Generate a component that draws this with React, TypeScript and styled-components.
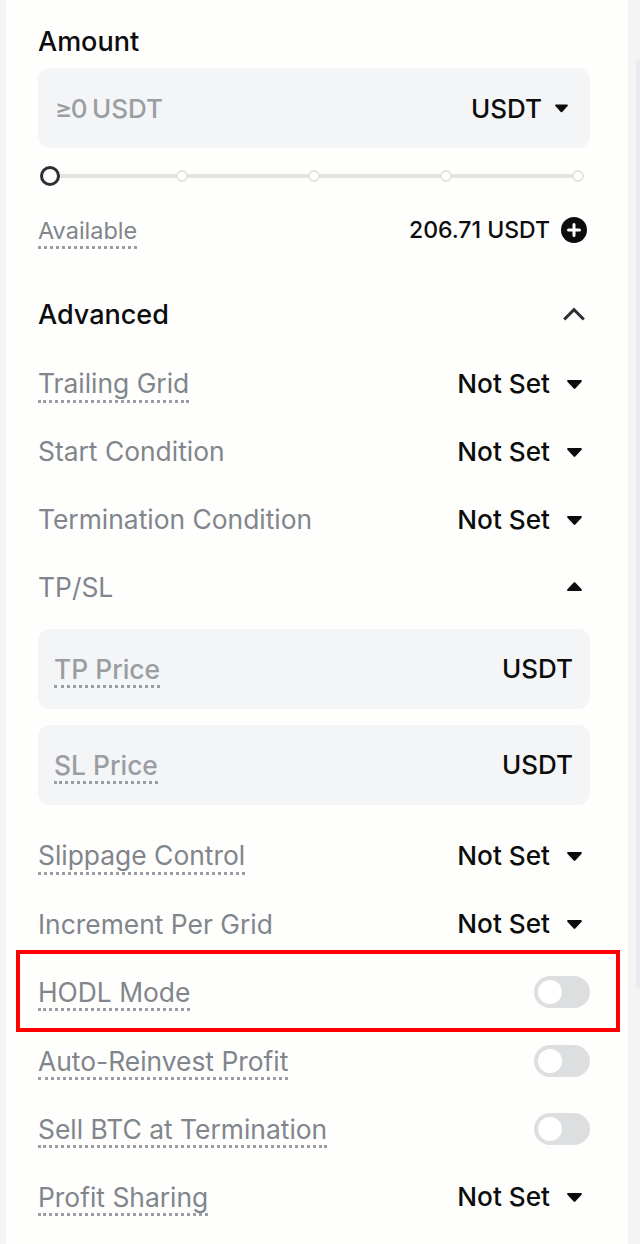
import React from 'react';
import styled, { createGlobalStyle } from 'styled-components';

const GlobalStyle = createGlobalStyle`
  html, body {
    margin: 0;
    padding: 0;
    background: #f3f4f6;
    overflow: hidden;
  }
  * {
    box-sizing: border-box;
  }
`;

const Caret = ({ up }: { up?: boolean }) => (
  <CaretIcon viewBox="0 0 15 9" $up={up}>
    <path d="M1.2 0h12.6c.9 0 1.4 1 .8 1.7L8.3 8.5c-.4.5-1.2.5-1.6 0L.4 1.7C-.2 1 .3 0 1.2 0z" />
  </CaretIcon>
);

const Select = ({ label, hint, low }: { label: string; hint?: boolean; low?: boolean }) => (
  <Row>
    <Label $hint={hint} $low={low}>{label}</Label>
    <RowValue>
      Not Set
      <Caret />
    </RowValue>
  </Row>
);

const ToggleRow = ({ label, first }: { label: string; first?: boolean }) => (
  <Row $shift={first}>
    <Label $hint $low>{label}</Label>
    <Toggle>
      <Knob />
    </Toggle>
  </Row>
);

const App = () => (
  <Page>
    <GlobalStyle />
    <Panel>
      <Title>Amount</Title>
      <Field>
        <Placeholder>
          <TightSign>≥0</TightSign> USDT
        </Placeholder>
        <Unit>
          USDT
          <SmallCaret viewBox="0 0 15 9">
            <path d="M1.2 0h12.6c.9 0 1.4 1 .8 1.7L8.3 8.5c-.4.5-1.2.5-1.6 0L.4 1.7C-.2 1 .3 0 1.2 0z" />
          </SmallCaret>
        </Unit>
      </Field>
      <Slider>
        <Thumb />
        <Tick />
        <Tick />
        <Tick />
        <Tick />
      </Slider>
      <AvailableRow>
        <SmallLabel>Available</SmallLabel>
        <Balance>
          206.71 USDT
          <svg width="26" height="26" viewBox="0 0 26 26">
            <circle cx="13" cy="13" r="13" fill="#0c0c0c" />
            <path d="M13 7.5v11M7.5 13h11" stroke="#fff" strokeWidth="3" strokeLinecap="round" />
          </svg>
        </Balance>
      </AvailableRow>
      <AdvancedRow>
        <AdvancedTitle>Advanced</AdvancedTitle>
        <svg width="24" height="16" viewBox="0 0 24 16">
          <path d="M2.2 13.5L12 3.7l9.8 9.8" fill="none" stroke="#2b2f36" strokeWidth="3" />
        </svg>
      </AdvancedRow>
      <Rows>
        <Select label="Trailing Grid" hint />
        <Select label="Start Condition" />
        <Select label="Termination Condition" />
        <Row>
          <Label>TP/SL</Label>
          <Caret up />
        </Row>
      </Rows>
      <PriceFields>
        <PriceField>
          <FieldLabel>TP Price</FieldLabel>
          <PriceUnit>USDT</PriceUnit>
        </PriceField>
        <PriceField>
          <FieldLabel>SL Price</FieldLabel>
          <PriceUnit>USDT</PriceUnit>
        </PriceField>
      </PriceFields>
      <Rows $top={17}>
        <Select label="Slippage Control" hint />
        <Select label="Increment Per Grid" low />
        <ToggleRow label="HODL Mode" />
        <ToggleRow label="Auto-Reinvest Profit" first />
        <ToggleRow label="Sell BTC at Termination" />
        <Select label="Profit Sharing" hint low />
      </Rows>
    </Panel>
    <Highlight />
    <ScrollBar />
  </Page>
);

export default App;

const Page = styled.div`
  position: relative;
  width: 640px;
  height: 1244px;
  overflow: hidden;
  padding-left: 6px;
  font-family: Inter, "Liberation Sans", sans-serif;
  background: #f3f4f6;
`;

const Panel = styled.div`
  width: 622px;
  height: 1244px;
  padding: 22px 38px 0 32px;
  background: #fefefd;
`;

const Title = styled.div`
  height: 40px;
  line-height: 40px;
  font-size: 27px;
  font-weight: 500;
  color: #0c0c0c;
`;

const AdvancedTitle = styled(Title)`
  margin-top: 2px;
`;

const Field = styled.div`
  display: flex;
  align-items: center;
  justify-content: space-between;
  height: 80px;
  margin-top: 6px;
  padding: 0 22px 0 17px;
  border-radius: 12px;
  background: #f4f5f7;
`;

const Placeholder = styled.span`
  font-size: 26px;
  font-weight: 450;
  word-spacing: -1px;
  color: #9a9da3;
`;

const TightSign = styled.span`
  letter-spacing: -1.5px;
`;

const Unit = styled.span`
  display: flex;
  align-items: center;
  gap: 13px;
  font-size: 26px;
  font-weight: 450;
  color: #0c0c0c;
`;

const SmallCaret = styled.svg`
  width: 13px;
  height: 9px;
  fill: #0c0c0c;
`;

const Slider = styled.div`
  position: relative;
  display: flex;
  align-items: center;
  gap: 120px;
  height: 20px;
  margin-top: 18px;
  padding-left: 2px;
  &::before {
    content: '';
    position: absolute;
    left: 10px;
    right: 8px;
    top: 8px;
    height: 4px;
    background: #e3e3e1;
  }
`;

const Thumb = styled.span`
  position: relative;
  width: 20px;
  height: 20px;
  margin-right: -4px;
  border: 3px solid #2b2f36;
  border-radius: 50%;
  background: #fefefd;
`;

const Tick = styled.span`
  position: relative;
  width: 12px;
  height: 12px;
  border: 2px solid #e3e3e1;
  border-radius: 50%;
  background: #fefefd;
`;

const AvailableRow = styled.div`
  display: flex;
  align-items: center;
  justify-content: space-between;
  height: 40px;
  margin-top: 25px;
`;

const SmallLabel = styled.span`
  padding: 4px 0 1px;
  border-bottom: 3px dotted #9a9da3;
  font-size: 23.5px;
  line-height: 28px;
  color: #81858c;
`;

const Balance = styled.span`
  display: flex;
  align-items: center;
  gap: 11px;
  margin: 0 3px 2px 0;
  font-size: 23px;
  font-weight: 450;
  color: #0c0c0c;
`;

const AdvancedRow = styled.div`
  display: flex;
  align-items: center;
  justify-content: space-between;
  height: 40px;
  margin-top: 43px;
  padding-right: 4px;
`;

const Rows = styled.div<{ $top?: number }>`
  display: flex;
  flex-direction: column;
  margin-top: ${(p) => p.$top ?? 16}px;
`;

const Row = styled.div<{ $shift?: boolean }>`
  display: flex;
  align-items: center;
  justify-content: space-between;
  height: 68px;
  margin-top: ${(p) => (p.$shift ? 1 : 0)}px;
`;

const Label = styled.span<{ $hint?: boolean; $low?: boolean }>`
  padding: ${(p) => (p.$low ? '4px 0 1px' : '3px 0 2px')};
  border-bottom: 3px dotted ${(p) => (p.$hint ? '#9a9da3' : 'transparent')};
  font-size: 26.4px;
  line-height: 30px;
  color: #81858c;
`;

const RowValue = styled.div`
  display: flex;
  align-items: center;
  gap: 17px;
  font-size: 26.2px;
  font-weight: 450;
  line-height: 30px;
  color: #0c0c0c;
`;

const CaretIcon = styled.svg<{ $up?: boolean }>`
  width: 15px;
  height: 9px;
  margin: ${(p) => (p.$up ? '0 8px 3px 0' : '0 8px 0 0')};
  fill: #0c0c0c;
  transform: ${(p) => (p.$up ? 'rotate(180deg)' : 'none')};
`;

const Toggle = styled.span`
  display: flex;
  align-items: center;
  width: 56px;
  height: 32px;
  padding-left: 4px;
  border-radius: 16px;
  background: #dcdee0;
`;

const Knob = styled.span`
  width: 24px;
  height: 24px;
  border-radius: 50%;
  background: #fff;
`;

const PriceFields = styled.div`
  display: flex;
  flex-direction: column;
  gap: 16px;
  margin-top: 7px;
`;

const PriceField = styled.div`
  display: flex;
  align-items: center;
  justify-content: space-between;
  height: 80px;
  padding: 0 17px 0 16px;
  border-radius: 12px;
  background: #f4f5f7;
`;

const FieldLabel = styled.span`
  padding: 4px 0 1px;
  border-bottom: 3px dotted #9a9da3;
  font-size: 26.4px;
  font-weight: 500;
  line-height: 30px;
  color: #9a9da3;
`;

const PriceUnit = styled.span`
  font-size: 26px;
  font-weight: 450;
  line-height: 30px;
  color: #0c0c0c;
`;

const Highlight = styled.div`
  position: absolute;
  left: 16px;
  top: 950px;
  width: 604px;
  height: 82px;
  border: 4px solid #fe0000;
`;

const ScrollBar = styled.div`
  position: absolute;
  left: 636px;
  top: 60px;
  width: 4px;
  height: 928px;
  background: #eaebef;
`;
